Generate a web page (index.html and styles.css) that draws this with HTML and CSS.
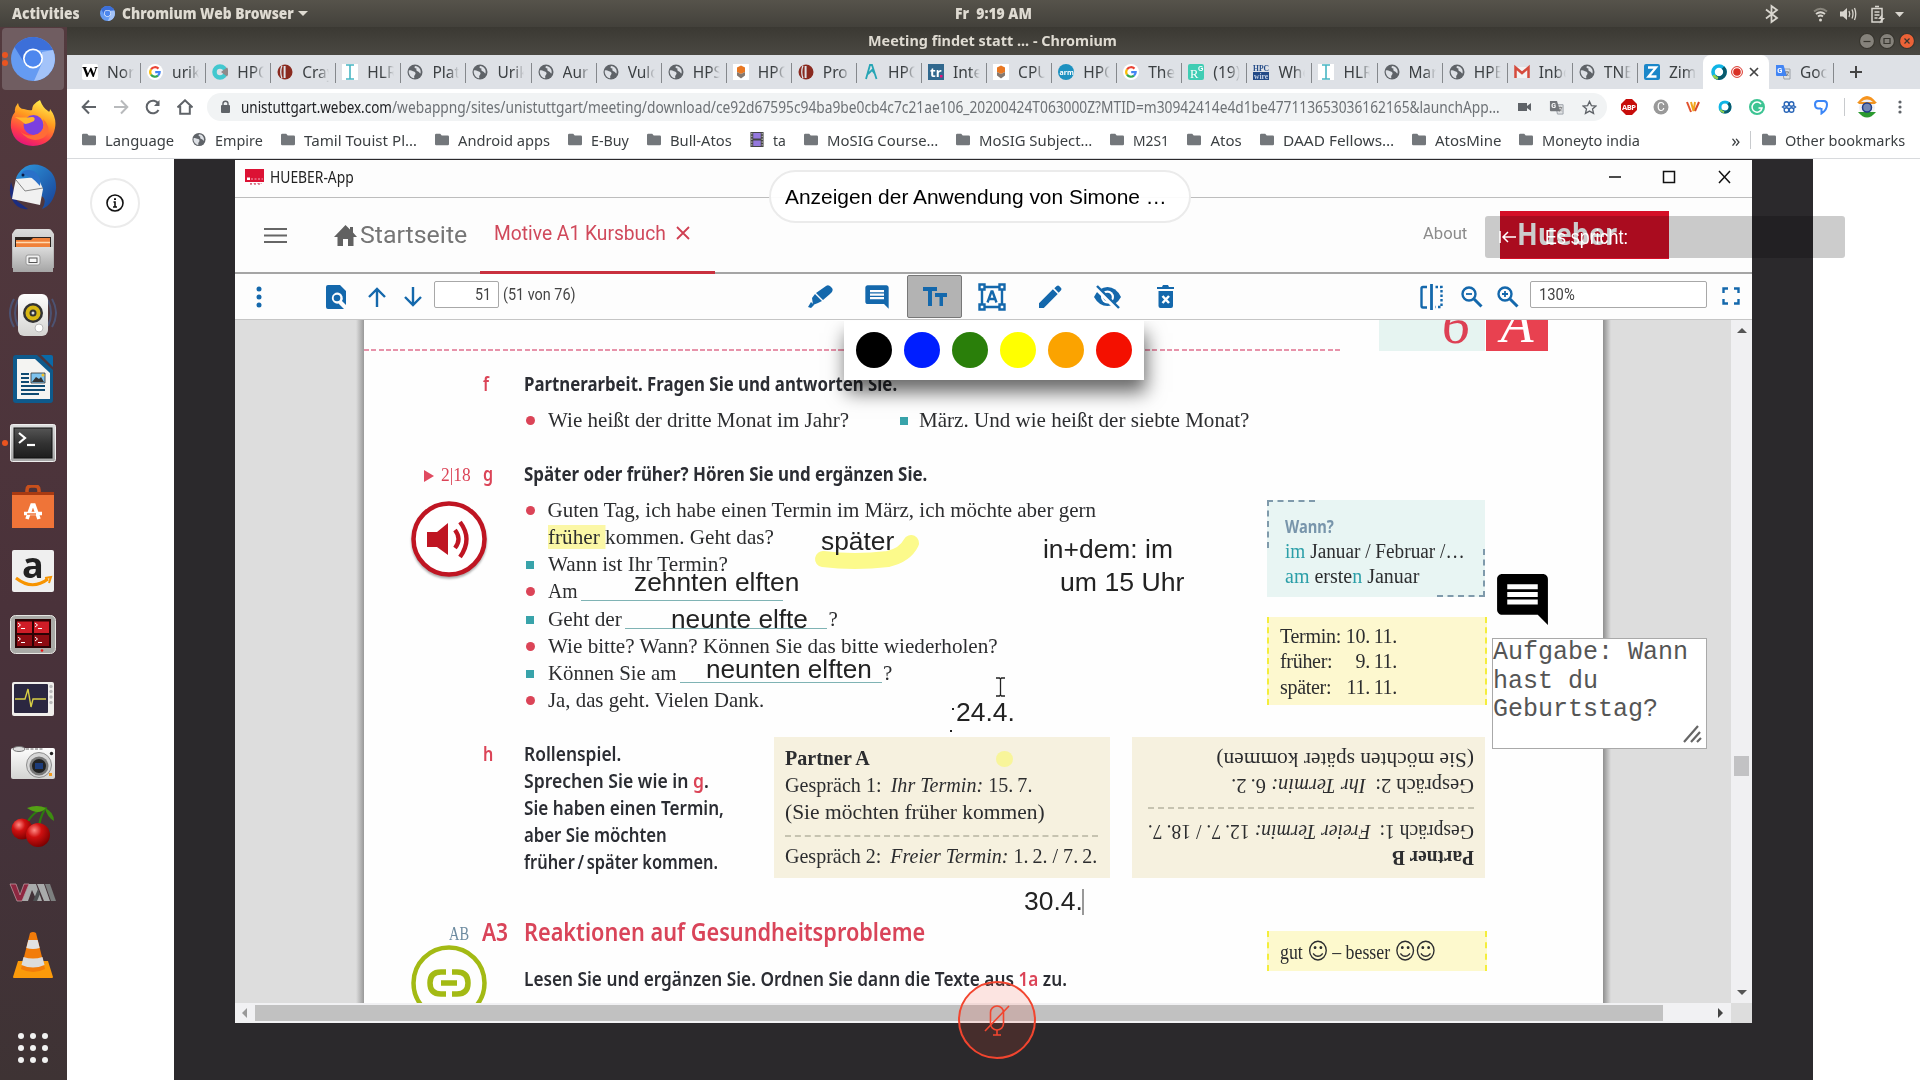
FILE: index.html
```html
<!DOCTYPE html>
<html lang="de">
<head>
<meta charset="utf-8">
<title>Meeting findet statt ... - Chromium</title>
<link rel="stylesheet" href="styles.css">
</head>
<body>
<svg class="defs" aria-hidden="true">
  <defs>
    <linearGradient id="gSilver" x1="0" y1="0" x2="0" y2="1"><stop offset="0" stop-color="#dcdcdc"/><stop offset="1" stop-color="#a5a5a5"/></linearGradient>
    <linearGradient id="gWhite" x1="0" y1="0" x2="0" y2="1"><stop offset="0" stop-color="#fdfdfd"/><stop offset="1" stop-color="#d4d4d2"/></linearGradient>
    <linearGradient id="gTerm" x1="0" y1="0" x2="0" y2="1"><stop offset="0" stop-color="#555"/><stop offset=".5" stop-color="#333"/><stop offset="1" stop-color="#1d1d1d"/></linearGradient>
    <linearGradient id="gFox" x1=".7" y1="0" x2=".3" y2="1"><stop offset="0" stop-color="#fff14f"/><stop offset=".4" stop-color="#ff9a1f"/><stop offset=".75" stop-color="#ff3b4a"/><stop offset="1" stop-color="#e2127f"/></linearGradient>
    <radialGradient id="gCherry" cx=".35" cy=".3" r=".75"><stop offset="0" stop-color="#ff8a84"/><stop offset=".4" stop-color="#cf1010"/><stop offset="1" stop-color="#7a0000"/></radialGradient>
    <linearGradient id="gBird" x1="0" y1="0" x2="1" y2="1"><stop offset="0" stop-color="#2f9ae0"/><stop offset="1" stop-color="#173f94"/></linearGradient>
  </defs>
  <symbol id="chromium" viewBox="0 0 44 44"><circle cx="22" cy="22" r="22" fill="#659bf2"/><path d="M3.500 10A22 22 0 0 1 42 13H22L14 27Z" fill="#3c6fd9"/><path d="M42 13A22 22 0 0 1 23 44L31 26L31 15Z" fill="#a3c3f9"/><circle cx="22" cy="21.500" r="10" fill="#fff"/><circle cx="22" cy="21.500" r="8.300" fill="#4d87ee"/></symbol>
  <symbol id="globe" viewBox="0 0 16 16"><circle cx="8" cy="8" r="7.500" fill="#5f6368"/><path d="M1.800 6.500C4 5.500 5 7 7 7.500C9.500 8.500 8.500 10.500 7.500 11.500S8 13.500 7 14.200C4 13.800 1.200 10.500 1.800 6.500ZM8 2C7 3.500 7.500 4.500 9.500 4.500C9 6 9.500 7 11 7.500S12.500 9.500 13.500 9.500C14.500 6 12 2 8 2Z" fill="#dee1e6"/></symbol>
  <symbol id="folder" viewBox="0 0 14 14"><path d="M0 2.500Q0 1.300 1.200 1.300H5.200L6.700 3H12.800Q14 3 14 4.200V11.500Q14 12.700 12.800 12.700H1.200Q0 12.700 0 11.500Z" fill="#73777b"/></symbol>
  <symbol id="google" viewBox="0 0 16 16"><circle cx="8" cy="8" r="8" fill="#fff"/><g fill="none" stroke-width="2.200"><path d="M4 5.500A4.800 4.800 0 0 1 11.500 4.600" stroke="#ea4335"/><path d="M4 5.400A4.800 4.800 0 0 0 4 10.700" stroke="#fbbc05"/><path d="M4 10.600A4.800 4.800 0 0 0 11 11.700" stroke="#34a853"/><path d="M11 11.700A4.700 4.700 0 0 0 12.700 8.100H8.200" stroke="#4285f4"/></g></symbol>
  <symbol id="cray" viewBox="0 0 16 16"><circle cx="8" cy="8" r="7.500" fill="#8a2a1f"/><path d="M5 1.500Q2.500 8 5 14.500" stroke="#dee1e6" stroke-width="1.300" fill="none"/><path d="M7.600 2V14" stroke="#dee1e6" stroke-width="2"/></symbol>
  <symbol id="ibar" viewBox="0 0 16 16"><path d="M0 0H16V16H0Z" fill="#fff"/><path d="M4 1H12M4 15H12M8 1V15" stroke="#48b6c4" stroke-width="1.600"/></symbol>
  <symbol id="cube" viewBox="0 0 16 16"><path d="M0 0H16V16H0Z" fill="#fff"/><path d="M8 1.500L12 3.500V8L8 10L4 8V3.500Z" fill="#e87722"/><path d="M4 8L8 10L12 8V11.500L8 14.500L4 11.500Z" fill="#85786f"/></symbol>
  <symbol id="webex" viewBox="0 0 16 16"><circle cx="8" cy="8" r="6" fill="none" stroke="#10b5e6" stroke-width="3.600"/><path d="M12 3.500A6 6 0 0 1 4 12.600" fill="none" stroke="#0b5a6b" stroke-width="3.600"/><path d="M7 14.200Q3.500 13.500 2.500 11" fill="none" stroke="#8fd14f" stroke-width="2.500"/></symbol>
  <symbol id="translate" viewBox="0 0 16 16"><path d="M7 5H15V15H9Z" fill="#dfe1e3" stroke="#9aa0a6"/><path d="M1 1H8.500L12 12H2Q1 12 1 11Z" fill="currentColor"/><text x="2.300" y="9" font-size="7.500" font-family="Roboto" font-weight="700" fill="#fff">G</text><path d="M10 8H14M12 7V8M13.500 8Q13 11 11 12M11 9.500L13.500 12" stroke="#777" stroke-width=".8" fill="none"/></symbol>
  <symbol id="commentbox" viewBox="0 0 24 24"><path d="M22 4C22 2.900 21.100 2 20 2H4C2.900 2 2 2.900 2 4V16C2 17.100 2.900 18 4 18H18L22 22V4ZM18 14H6V12H18V14ZM18 11H6V9H18V11ZM18 8H6V6H18V8Z"/></symbol>
  <symbol id="lens" viewBox="0 0 22 22"><circle cx="8" cy="8" r="6.500" fill="none" stroke="currentColor" stroke-width="2.400"/><path d="M13 13L20.500 20.500" stroke="currentColor" stroke-width="3"/></symbol>
</svg>

<header class="topbar">
  <span class="activities"><b data-w="68">Activities</b></span>
  <svg class="appicon" width="15" height="15"><use href="#chromium"/></svg>
  <b data-w="172">Chromium Web Browser</b><i class="caret"></i>
  <span class="clock"><b data-w="77">Fr&nbsp; 9:19 AM</b></span>
  <svg class="tray" width="150" height="22" viewBox="0 0 150 22" fill="none" stroke="#d9d6cf" stroke-width="1.800">
    <path d="M9 6.500L20 15L14.500 19V3L20 7L9 15.500"/>
    <path d="M57 8.500Q63.500 3 70 8.500" stroke="#88857c"/><path d="M59 11Q63.500 7.500 68 11M61 13.500Q63.500 11.500 66 13.500"/><circle cx="63.500" cy="17" r="1.500" fill="#d9d6cf" stroke="none"/>
    <path d="M83 8.500H86L90 5V17L86 13.500H83Z" fill="#d9d6cf" stroke="none"/><path d="M92 8Q93.500 11 92 14M95 6.500Q97 11 95 15.500M97.500 5Q100 11 97.500 17" stroke-width="1.300"/>
    <path d="M115 5.500H125V19H115ZM118 3.500H122M117.500 9H122.500M117.500 12H122.500M117.500 15H120.500" stroke-width="1.500"/><path d="M125.500 11L121 16H124L122.500 20.500L128 15H125Z" fill="#d9d6cf" stroke="none"/>
    <path d="M138 9H147L142.500 14Z" fill="#d9d6cf" stroke="none"/>
  </svg>
</header>

<div class="desktop">
  <nav class="dock">
    <div class="slot active run2"><svg width="44" height="44"><use href="#chromium"/></svg></div>
    <div class="slot"><svg width="46" height="46" viewBox="0 0 46 46"><path d="M30 0Q33 8 38 11Q40 13 40 9Q47 18 45 28Q42 45 23 46Q4 45 1 28Q0 18 5 12Q4 8 8 3Q9 9 14 9Q20 11 22 10Q22 4 30 0Z" fill="url(#gFox)"/><circle cx="23.500" cy="25" r="10" fill="#7b3fe0"/><path d="M5 17Q14 18 22 17Q26 17 24 21Q18 24 15 24Q12 21 5 17Z" fill="#ffb62d"/><path d="M10 31Q17 38 28 34Q36 29 33 19Q44 30 33 38Q20 44 10 31Z" fill="#ff6c36"/></svg></div>
    <div class="slot"><svg width="48" height="48" viewBox="0 0 48 48"><path d="M9 11Q18 -2 33 3Q48 9 47 26Q44 42 33 46Q38 38 34 34L7 20Q6 15 9 11Z" fill="url(#gBird)"/><path d="M2 19Q-2 34 8 43Q13 47 19 46L8 38Z" fill="#1b2d80"/><path d="M7 16L29 14L34 26L31 42L3 36Q5 24 7 16Z" fill="#f1f1f1"/><path d="M7 17L16 28L34 25" fill="none" stroke="#888"/><path d="M12 11Q15 5 25 8Q33 14 31 23Q22 12 12 11Z" fill="#2a71c9"/><circle cx="14" cy="12" r="1.500" fill="#0c1a44"/></svg></div>
    <div class="slot"><svg width="44" height="44" viewBox="0 0 44 44"><path d="M3 2Q4 0 6 0H38Q40 0 41 2L43 5V39H1V5Z" fill="url(#gSilver)"/><path d="M4 8H40V18H4Z" fill="#2b2320"/><path d="M5 11H20L22 9H39V18H5Z" fill="#f0813a"/><path d="M5 13.500H39" stroke="#ffd9b0" stroke-width="1.500"/><path d="M2 18H42V43H2Z" fill="url(#gSilver)"/><rect x="15" y="26" width="14" height="10" rx="2" fill="#f0f0f0" stroke="#999"/><rect x="18" y="29" width="8" height="4.500" fill="#f7f7f7" stroke="#555"/></svg></div>
    <div class="slot"><svg width="48" height="44" viewBox="0 0 48 44"><path d="M5 6Q-3 20 5 34M9 7Q3 20 9 33M43 6Q51 20 43 34M39 7Q45 20 39 33" fill="none" stroke="#4b5f8a" stroke-width="2" opacity=".7"/><rect x="9" y="1" width="30" height="42" rx="6" fill="url(#gWhite)"/><circle cx="24" cy="20" r="10" fill="#333"/><circle cx="24" cy="20" r="7.500" fill="#d8b712"/><circle cx="24" cy="20" r="3.500" fill="#333"/><circle cx="24" cy="20" r="1.500" fill="#ddd"/><circle cx="30" cy="35" r="4" fill="#fff" stroke="#bbb"/></svg></div>
    <div class="slot"><svg width="40" height="48" viewBox="0 0 40 48"><path d="M3 0H24L40 15V45Q40 48 37 48H3Q0 48 0 45V3Q0 0 3 0Z" fill="#0e5a8c"/><path d="M4 4H22L37 18V44H4Z" fill="#f4f4f2"/><path d="M28 0H38Q40 0 40 2V12Z" fill="#0a6aa8"/><path d="M8 19H16M8 23H16M8 27H16M8 31H32M8 35H32M8 39H26" stroke="#0e4a72" stroke-width="1.800"/><path d="M18 18H32V28H18Z" fill="#7ec3ee" stroke="#333" stroke-width=".8"/><path d="M19 27L23 22L26 24L28 22L31 27Z" fill="#333"/><circle cx="30" cy="20" r="1.500" fill="#f6c324"/></svg></div>
    <div class="slot run1"><svg width="46" height="38" viewBox="0 0 46 38"><rect x=".5" y=".5" width="45" height="37" rx="2" fill="url(#gSilver)" stroke="#eee"/><rect x="4" y="4" width="38" height="30" fill="url(#gTerm)" stroke="#111"/><path d="M9 9L15 14L9 19" fill="none" stroke="#fff" stroke-width="2.200"/><path d="M17 21H25" stroke="#fff" stroke-width="2.200"/></svg></div>
    <div class="slot"><svg width="42" height="44" viewBox="0 0 42 44"><path d="M15 12V5Q15 1 19 1H23Q27 1 27 5V12" fill="none" stroke="#c9501c" stroke-width="3.500"/><path d="M0 7H42V13H0Z" fill="#a83a12"/><path d="M0 10H42V43H0Z" fill="#ef7438"/><path d="M15 34L20 20H22L27 34M12 28.500H30" stroke="#fff" stroke-width="3.600" fill="none"/><path d="M15 29H24" stroke="#ef7438" stroke-width="1.500"/></svg></div>
    <div class="slot"><svg width="42" height="42" viewBox="0 0 42 42"><rect width="42" height="42" rx="2" fill="#efefef"/><text x="10" y="28" font-family="Open Sans" font-weight="700" font-size="36" fill="#222">a</text><path d="M4 28Q20 41 36 29" fill="none" stroke="#f79400" stroke-width="3"/><path d="M33 28L39 27L37 33" fill="none" stroke="#f79400" stroke-width="2"/></svg></div>
    <div class="slot"><svg width="46" height="40" viewBox="0 0 46 40"><rect x=".5" y=".5" width="45" height="38" rx="5" fill="#a9aaa6" stroke="#e6e6e2"/><rect x="5" y="4" width="36" height="29" fill="#2b0305"/><path d="M7 6.500H22V18H7ZM24 6.500H39V18H24Z" fill="#cf1d27"/><path d="M7 20H22V31H7ZM24 20H39V31H24Z" fill="#8d0c12"/><path d="M8 8L10.500 10L8 12M25 8L27.500 10L25 12M8 22L10.500 24L8 26M25 22L27.500 24L25 26M11 13.500H15M28 13.500H32M11 27.500H15M28 27.500H32" stroke="#fff" fill="none"/><circle cx="32" cy="35.500" r="1.300" fill="#e11"/></svg></div>
    <div class="slot"><svg width="42" height="34" viewBox="0 0 42 34"><rect width="42" height="34" rx="2" fill="#f1efec"/><rect x="2" y="2" width="34" height="29" rx="1" fill="#2b2740"/><path d="M3 17H13L16 7L19 25L21 17H34" fill="none" stroke="#d8cf45" stroke-width="1.400"/><g fill="#bbb"><circle cx="39" cy="4.500" r="1.700"/><circle cx="39" cy="9.500" r="1.700"/><circle cx="39" cy="15" r="1.700"/><circle cx="39" cy="20.500" r="1.700"/></g></svg></div>
    <div class="slot"><svg width="44" height="34" viewBox="0 0 44 34"><rect y="2" width="44" height="31" rx="2" fill="url(#gWhite)"/><ellipse cx="8" cy="3" rx="6" ry="2.500" fill="#ddd" stroke="#777"/><path d="M15 3H32" stroke="#666" stroke-dasharray="3 1.500"/><circle cx="28" cy="19" r="12.500" fill="#d6d6d6" stroke="#8d8d8d"/><circle cx="28" cy="20" r="9.500" fill="#777"/><circle cx="28" cy="20" r="7" fill="#222"/><rect x="24" y="17" width="8" height="6" fill="#1d3c7a"/><circle cx="40.500" cy="7.500" r="1.700" fill="#222"/><path d="M38 27H41V30H38Z" fill="#f29a1f"/></svg></div>
    <div class="slot"><svg width="44" height="44" viewBox="0 0 44 44"><path d="M15 20Q22 5 36 3M28 24Q28 14 34 4" fill="none" stroke="#2d7a10" stroke-width="2.200"/><path d="M16 3Q26 -1 35 3Q28 11 16 3Z" fill="#54a014"/><path d="M34 3Q43 7 43 16Q36 12 34 3Z" fill="#3d8d10"/><circle cx="11" cy="24" r="10.500" fill="url(#gCherry)"/><circle cx="27" cy="30" r="12" fill="url(#gCherry)"/></svg></div>
    <div class="slot vm"><svg width="48" height="20" viewBox="0 0 48 20"><path d="M1 1H7L11 12L15 1H20L13 18H8Z" fill="#8d2740" stroke="#c9a3ab" stroke-width=".7"/><path d="M13 18L20 1H27L33 18H28L23 7L19 18ZM28 1H35L41 18H35Z" fill="#a9abab"/><path d="M36 1H41L47 18H42Z" fill="#7c7f7f"/><path d="M24 18L29 6L31 11L28 18Z" fill="#4d5052"/></svg></div>
    <div class="slot"><svg width="42" height="46" viewBox="0 0 42 46"><path d="M6 29H36L41 45Q41 46 40 46H2Q1 46 1 45Z" fill="#fb9a0a"/><path d="M18 1Q21 -1 24 1L33 37Q21 43 9 37Z" fill="#f27c0a"/><path d="M16.300 8H25.700L27.700 16Q21 18 14.300 16Z" fill="#e2e2e2"/><path d="M11.500 25Q21 28 30.500 25L32.500 33Q21 38 9.500 33Z" fill="#dcdcdc"/></svg></div>
    <div class="grid9"><i></i><i></i><i></i><i></i><i></i><i></i><i></i><i></i><i></i></div>
  </nav>

  <div class="browser">
    <div class="titlebar">
      <b data-w="249">Meeting findet statt ... - Chromium</b>
      <div class="winbtns"><svg viewBox="0 0 16 16"><circle cx="8" cy="8" r="7.500"/><path d="M4.500 8.500H11.500"/></svg><svg viewBox="0 0 16 16"><circle cx="8" cy="8" r="7.500"/><path d="M5 5.500H11V10.500H5Z"/></svg><svg class="x" viewBox="0 0 16 16"><circle cx="8" cy="8" r="7.500"/><path d="M5.500 5.500L10.500 10.500M10.500 5.500L5.500 10.500"/></svg></div>
    </div>

    <div class="tabs">
      <div class="tab"><svg><rect width="16" height="16" rx="2" fill="#fff"/><text x="0" y="13" font-family="Liberation Serif" font-weight="700" font-size="15" textLength="16" lengthAdjust="spacingAndGlyphs">W</text></svg><span>Nor</span></div>
      <div class="tab"><svg><use href="#google"/></svg><span>urik</span></div>
      <div class="tab"><svg><circle cx="8" cy="8" r="5.500" fill="none" stroke="#42c8cf" stroke-width="4.500"/><path d="M9 8L15 3.500A7.500 7.500 0 0 1 15 12.500Z" fill="#8f8a8a"/></svg><span>HPC</span></div>
      <div class="tab"><svg><use href="#cray"/></svg><span>Cray</span></div>
      <div class="tab"><svg><use href="#ibar"/></svg><span>HLR</span></div>
      <div class="tab"><svg><use href="#globe"/></svg><span>Plat</span></div>
      <div class="tab"><svg><use href="#globe"/></svg><span>Urik</span></div>
      <div class="tab"><svg><use href="#globe"/></svg><span>Aur</span></div>
      <div class="tab"><svg><use href="#globe"/></svg><span>Vulc</span></div>
      <div class="tab"><svg><use href="#globe"/></svg><span>HPS</span></div>
      <div class="tab"><svg><use href="#cube"/></svg><span>HPC</span></div>
      <div class="tab"><svg><use href="#cray"/></svg><span>Pro</span></div>
      <div class="tab"><svg fill="none" stroke="#26a5b5" stroke-width="1.800"><path d="M3 15L7 1H9L13.500 15M5 10L9 6L12 10"/></svg><span>HPC</span></div>
      <div class="tab"><svg><path d="M0 0H16V16H0Z" fill="#31688e"/><text x="2" y="13" font-family="Open Sans" font-weight="700" font-size="13" fill="#fff">tr</text><path d="M12 11H14.500V13.500H12Z" fill="#e8127c"/></svg><span>Inte</span></div>
      <div class="tab"><svg><use href="#cube"/></svg><span>CPU</span></div>
      <div class="tab"><svg><circle cx="8" cy="8" r="8" fill="#1d91c0"/><text x="1.500" y="10.500" font-family="Open Sans" font-weight="700" font-size="7" fill="#fff">arm</text></svg><span>HPC</span></div>
      <div class="tab"><svg><use href="#google"/></svg><span>The</span></div>
      <div class="tab"><svg><rect width="16" height="16" rx="2" fill="#40cdb4"/><text x="2" y="13.500" font-family="Liberation Serif" font-size="12.500" fill="#fff">R</text><text x="10" y="7" font-family="Liberation Sans" font-weight="700" font-size="7" fill="#fff">G</text></svg><span>(19)</span></div>
      <div class="tab"><svg><text y="7" font-family="Liberation Serif" font-weight="700" font-size="8" fill="#234a87" textLength="16" lengthAdjust="spacingAndGlyphs">HPC</text><path d="M0 8H16V16H0Z" fill="#234a87"/><text x="1" y="14.500" font-family="Liberation Serif" font-weight="700" font-size="7.500" fill="#c5d3e8">wire</text></svg><span>Whe</span></div>
      <div class="tab"><svg><use href="#ibar"/></svg><span>HLR</span></div>
      <div class="tab"><svg><use href="#globe"/></svg><span>Mar</span></div>
      <div class="tab"><svg><use href="#globe"/></svg><span>HPE</span></div>
      <div class="tab"><svg><path d="M1 3H15V14H1Z" fill="#f2f2f2"/><path d="M1.500 14V3.500L8 9L14.500 3.500V14" fill="none" stroke="#d54b3d" stroke-width="2.500"/></svg><span>Inbo</span></div>
      <div class="tab"><svg><use href="#globe"/></svg><span>TNE</span></div>
      <div class="tab last"><svg><rect width="16" height="16" rx="2" fill="#1b87c9"/><path d="M4 3.500H12L4.500 12.500H12.500" fill="none" stroke="#fff" stroke-width="2.300"/></svg><span>Zim</span></div>
      <div class="tab current"><svg><use href="#webex"/></svg><svg width="12" height="16" viewBox="0 0 12 16"><circle cx="6" cy="8" r="5.400" fill="#fff" stroke="#d93025"/><circle cx="6" cy="8" r="3.800" fill="#d93025"/></svg><svg width="10" height="16" viewBox="0 0 10 16"><path d="M1 4L9 12M9 4L1 12" stroke="#444" stroke-width="1.700"/></svg></div>
      <div class="tab"><svg class="gt"><use href="#translate"/></svg><span>Goo</span></div>
      <svg class="plus" width="14" height="14" viewBox="0 0 14 14"><path d="M7 1V13M1 7H13" stroke="#444" stroke-width="2"/></svg>
    </div>

    <div class="navbar">
      <svg width="16" height="16" viewBox="0 0 16 16" class="ln"><path d="M15 8H2M8 1.500L1.700 8L8 14.500"/></svg>
      <svg width="16" height="16" viewBox="0 0 16 16" class="ln dim"><path d="M1 8H14M8 1.500L14.300 8L8 14.500"/></svg>
      <svg width="16" height="16" viewBox="0 0 16 16" class="ln"><path d="M13.500 11A6.300 6.300 0 1 1 13.500 5"/><path d="M14.500 1V7H9Z" fill="#5f6368" stroke="none"/></svg>
      <svg width="16" height="16" viewBox="0 0 16 16" class="ln"><path d="M.5 8.500L8 1.300L15.500 8.500M3.200 7V14.700H12.800V7"/></svg>
      <div class="omnibox">
        <svg width="9" height="14" viewBox="0 0 9 14"><rect y="5" width="9" height="8" rx="1" fill="#5f6368"/><path d="M2 6V3.500Q2 1.300 4.500 1.300T7 3.500V6" fill="none" stroke="#5f6368" stroke-width="1.400"/></svg>
        <span class="url"><span class="host" data-w="151">unistuttgart.webex.com</span><span data-w="1108">/webappng/sites/unistuttgart/meeting/download/ce92d67595c94ba9be0cb4c7c21ae106_20200424T063000Z?MTID=m30942414e4d1be477113653036162165&amp;launchApp…</span></span>
        <svg width="13" height="10" viewBox="0 0 13 10"><path d="M0 1H9V4L13 1V9L9 6V9H0Z" fill="#5f6368"/></svg>
        <svg width="15" height="15" viewBox="0 0 16 16" class="grey"><use href="#translate"/></svg>
        <svg width="15" height="15" viewBox="0 0 16 16"><path d="M8 1.500L10 6L14.800 6.400L11.200 9.600L12.300 14.300L8 11.800L3.700 14.300L4.800 9.600L1.200 6.400L6 6Z" fill="none" stroke="#5f6368" stroke-width="1.400"/></svg>
      </div>
      <div class="ext">
        <svg><path d="M5 0H11L16 5V11L11 16H5L0 11V5Z" fill="#c70d0b"/><text x="1" y="11" font-family="Open Sans" font-weight="700" font-size="7.500" fill="#fff" textLength="14">ABP</text></svg>
        <svg><circle cx="8" cy="8" r="7.500" fill="#999"/><text x="4" y="12" font-family="Roboto" font-size="12" fill="#fff">C</text></svg>
        <svg fill="none" stroke-width="2"><path d="M2 3L6 13" stroke="#e2502d"/><path d="M6 3L8.500 12L10 3" stroke="#f2a51c"/><path d="M14 3L10 12" stroke="#d6492a"/></svg>
        <svg viewBox="-1.500 -1.500 19 19"><use href="#webex" width="16" height="16"/></svg>
        <svg><circle cx="8" cy="8" r="8" fill="#3dc493"/><path d="M12 5A5 5 0 1 0 13 9H9.500" fill="none" stroke="#fff" stroke-width="1.500"/></svg>
        <svg fill="none" stroke="#2a66b8" stroke-width="1.400"><circle cx="5.500" cy="5" r="2.300"/><circle cx="10.500" cy="5" r="2.300"/><circle cx="5.500" cy="11" r="2.300"/><circle cx="10.500" cy="11" r="2.300"/><path d="M3.500 6.500L1.500 8L3.500 9.500M12.500 6.500L14.500 8L12.500 9.500"/></svg>
        <svg fill="none" stroke="#3b86f7" stroke-width="2"><path d="M8 9.500H5Q2 9 2 5.500T5 2H11Q14 2 14 5.500Q14 11 8.500 14.500V9"/></svg>
      </div>
      <i class="vsep"></i>
      <svg class="avatar" width="22" height="22" viewBox="0 0 22 22"><path d="M2 6Q11 -6 20 6Z" fill="#f7941d"/><circle cx="11" cy="11.500" r="8" fill="#eef0f5"/><path d="M2 16H20Q11 27 2 16Z" fill="#2b9a2f"/><path d="M1 6H21L19 8H3Z" fill="#ee9422"/><circle cx="11" cy="11.500" r="4.500" fill="#7287b5" stroke="#1f3c88" stroke-width="1.500"/></svg>
      <svg width="4" height="14" viewBox="0 0 4 14" fill="#5f6368"><circle cx="2" cy="2" r="1.600"/><circle cx="2" cy="7" r="1.600"/><circle cx="2" cy="12" r="1.600"/></svg>
    </div>

    <div class="bookmarks">
      <a><svg><use href="#folder"/></svg><span data-w="69">Language</span></a>
      <a><svg><use href="#globe"/></svg><span data-w="48">Empire</span></a>
      <a><svg><use href="#folder"/></svg><span data-w="113">Tamil Touist Pl…</span></a>
      <a><svg><use href="#folder"/></svg><span data-w="92">Android apps</span></a>
      <a><svg><use href="#folder"/></svg><span data-w="38">E-Buy</span></a>
      <a><svg><use href="#folder"/></svg><span data-w="62">Bull-Atos</span></a>
      <a><svg viewBox="0 0 14 16"><path d="M0 0H14V16H0Z" fill="#444"/><path d="M3 1H11V7H3ZM3 9H11V15H3Z" fill="#9478dd"/><path d="M1.500 1V16M12.500 1V16" stroke="#ddd" stroke-dasharray="1.500 1.500"/></svg><span data-w="13">ta</span></a>
      <a><svg><use href="#folder"/></svg><span data-w="111">MoSIG Course…</span></a>
      <a><svg><use href="#folder"/></svg><span data-w="113">MoSIG Subject…</span></a>
      <a><svg><use href="#folder"/></svg><span data-w="36">M2S1</span></a>
      <a><svg><use href="#folder"/></svg><span data-w="31">Atos</span></a>
      <a><svg><use href="#folder"/></svg><span data-w="111">DAAD Fellows…</span></a>
      <a><svg><use href="#folder"/></svg><span data-w="66">AtosMine</span></a>
      <a><svg><use href="#folder"/></svg><span data-w="98">Moneyto india</span></a>
      <span class="more">»</span><i class="vsep"></i>
      <a class="other"><svg><use href="#folder"/></svg><span data-w="120">Other bookmarks</span></a>
    </div>

    <main class="meeting">
      <div class="side"><button class="info" aria-label="Info"><svg width="18" height="18" viewBox="0 0 18 18" fill="none" stroke="#111" stroke-width="1.600"><circle cx="9" cy="9" r="8"/><path d="M7.500 8H9V13M7 13H11"/><path d="M9 4.300V6" stroke-width="2"/></svg></button></div>
      <div class="stage">
        <div class="share">
          <div class="apptitle">
            <svg width="19" height="17" viewBox="0 0 19 17"><path d="M0 0H19V13H0Z" fill="#dc1234"/><path d="M2 8.500H5V11H2Z" fill="#fff"/><path d="M6 10H18M5 14.500H17" stroke="#eab" stroke-dasharray="2 1.500"/><path d="M5 15H17" stroke="#c22b48" stroke-dasharray="2 2"/></svg>
            <span data-w="84">HUEBER-App</span>
            <svg class="wc" width="124" height="14" viewBox="0 0 124 14" fill="none" stroke="#111" stroke-width="1.500"><path d="M1 7H13M111 1L122 13M122 1L111 13"/><rect x="55.500" y="1.500" width="11" height="11"/></svg>
          </div>
          <div class="appnav">
            <svg class="burger" width="23" height="17" viewBox="0 0 23 17"><path d="M0 2H23M0 8.500H23M0 15H23" stroke="#666" stroke-width="2.200"/></svg>
            <svg class="home" width="23" height="21" viewBox="0 0 23 21"><path d="M11.500 0L16 4.500V2H19V7.500L23 12H19.500V21H14V14H9V21H3.500V12H0Z" fill="#616161"/></svg>
            <span class="start" data-w="107">Startseite</span>
            <div class="booktab"><span data-w="172">Motive A1 Kursbuch</span><svg width="14" height="14" viewBox="0 0 14 14"><path d="M1 1L13 13M13 1L1 13" stroke="#cf3f52" stroke-width="1.800"/></svg></div>
            <span class="about"><span data-w="44">About</span></span>
            <div class="logo"><span data-w="100">Hueber</span></div>
          </div>
          <div class="tools">
            <svg width="6" height="22" viewBox="0 0 6 22"><circle cx="3" cy="3" r="2.500"/><circle cx="3" cy="11" r="2.500"/><circle cx="3" cy="19" r="2.500"/></svg>
            <svg width="21" height="24" viewBox="0 0 21 24"><path d="M2 0H14L20 6V20L16 16A5.500 5.500 0 1 0 12.500 18.500L18 24H2Q0 24 0 22V2Q0 0 2 0Z"/><circle cx="11" cy="13" r="3.300"/></svg>
            <svg class="st" width="18" height="20" viewBox="0 0 18 20"><path d="M9 20V2M1 10L9 2L17 10"/></svg>
            <svg class="st" width="18" height="20" viewBox="0 0 18 20"><path d="M9 0V18M1 10L9 18L17 10"/></svg>
            <div class="box pageno"><span data-w="16">51</span></div>
            <div class="cnt"><span data-w="73">(51 von 76)</span></div>
            <svg width="25" height="24" viewBox="0 0 25 24"><path d="M18 1Q21 -1 24 3Q26 6 22 9L15 15L8 8ZM7 9L14 16L10 18L5 20L4 13ZM3 17L6 20L3 23L0 22Z"/></svg>
            <svg width="28" height="28"><use href="#commentbox"/></svg>
            <div class="pressed"><svg width="24" height="20" viewBox="0 0 24 20"><path d="M0 0H14V4H9V19H5V4H0ZM12 6H24V10H20V19H16.500V10H12Z"/></svg></div>
            <svg class="st" width="28" height="28" viewBox="0 0 28 28" stroke-width="2"><path d="M4 4H24V24H4Z"/><path d="M1.500 1.500H6.500V6.500H1.500ZM21.500 1.500H26.500V6.500H21.500ZM1.500 21.500H6.500V26.500H1.500ZM21.500 21.500H26.500V26.500H21.500Z" fill="#fff"/><path d="M9.500 19.500L13.500 8.500H14.500L18.500 19.500M11 16H17"/></svg>
            <svg width="23" height="23" viewBox="0 0 24 24"><path d="M0 19L14.500 4.500L19.500 9.500L5 24H0ZM20.500 8L16 3.500L18.500 1Q20 0 21 1L23 3Q24 4 23 5.500Z"/></svg>
            <svg width="27" height="24" viewBox="0 0 27 24"><path d="M0 12Q5 2 13.500 2T27 12Q22 21 13.500 21T0 12Z"/><circle cx="13.500" cy="12" r="6.500" fill="#fff"/><circle cx="13.500" cy="12" r="4.300"/><path d="M1.500 2L23.500 24" stroke="#fff" stroke-width="5"/><path d="M3 1L25 23" stroke="#1468ac" stroke-width="2.400"/></svg>
            <svg width="17" height="23" viewBox="0 0 17 23"><path d="M0 2H5L6 0H11L12 2H17V4H0ZM1.500 6H16V21Q16 23 14 23H3.500Q1.500 23 1.500 21Z"/><path d="M5.500 11L12 18M12 11L5.500 18" stroke="#fff" stroke-width="2.500"/></svg>
            <svg class="st" width="23" height="26" viewBox="0 0 23 26"><path d="M7 3H3Q1.500 3 1.500 4.500V21.500Q1.500 23.500 3 23.500H7"/><path d="M11.500 0V26" stroke-width="2.800"/><path d="M15.500 3H21.500V23H15.500" stroke-dasharray="2.500 2"/></svg>
            <svg class="st" width="22" height="22" viewBox="0 0 22 22"><use href="#lens"/><path d="M5 8H11" stroke-width="1.800"/></svg>
            <svg class="st" width="22" height="22" viewBox="0 0 22 22"><use href="#lens"/><path d="M5 8H11M8 5V11" stroke-width="1.800"/></svg>
            <div class="box zoom"><span data-w="36">130%</span></div>
            <svg class="st full" width="18" height="18" viewBox="0 0 18 18" stroke-width="3"><path d="M1.500 6V1.500H6M12 1.500H16.500V6M16.500 12V16.500H12M6 16.500H1.500V12"/></svg>
            <div class="palette"><i class="c1"></i><i class="c2"></i><i class="c3"></i><i class="c4"></i><i class="c5"></i><i class="c6"></i></div>
          </div>

          <div class="viewer">
            <article class="sheet">
              <div class="pagehead"><i class="rule"></i><div class="chap"><i>6</i></div><div class="part"><i>A</i></div></div>
              <div class="upper">
                <div class="lesson">
                  <h3><em class="lf">f</em><span data-w="373">Partnerarbeit. Fragen Sie und antworten Sie.</span></h3>
                  <div class="duo"><p class="r"><span data-w="301">Wie heißt der dritte Monat im Jahr?</span></p><p class="s"><span data-w="330">März. Und wie heißt der siebte Monat?</span></p></div>
                  <h3 class="g"><small><span data-w="30">2|18</span></small><em>g</em><span data-w="403">Später oder früher? Hören Sie und ergänzen Sie.</span></h3>
                  <div class="talk">
                    <svg class="speaker" width="76" height="78" viewBox="0 0 76 78"><circle cx="38" cy="38" r="35.500" fill="#fff" stroke="#bf1522" stroke-width="4.500"/><path d="M16 31H26L37 22V54L26 46H16Z" fill="#bf1522"/><path d="M44 29Q51 38 44 47M49 21Q62 38 49 56" fill="none" stroke="#bf1522" stroke-width="4.300"/></svg>
                    <p class="r"><span data-w="549">Guten Tag, ich habe einen Termin im März, ich möchte aber gern</span></p>
                    <p><span data-w="226"><mark>früher </mark>kommen. Geht das?</span></p>
                    <p class="s"><span data-w="180">Wann ist Ihr Termin?</span></p>
                    <p class="r"><span data-w="30">Am</span><u></u></p>
                    <p class="s"><span data-w="74">Geht der</span><u></u>?</p>
                    <p class="r"><span data-w="450">Wie bitte? Wann? Können Sie das bitte wiederholen?</span></p>
                    <p class="s"><span data-w="128">Können Sie am</span><u></u>?</p>
                    <p class="r"><span data-w="216">Ja, das geht. Vielen Dank.</span></p>
                  </div>
                </div>
                <aside>
                  <div class="wann"><b data-w="49">Wann?</b><p><span data-w="180"><q>im</q> Januar / Februar /…</span></p><p><span data-w="134"><q>am</q> erste<q>n</q> Januar</span></p></div>
                  <div class="dates"><p><span>Termin:</span><span>10.&thinsp;11.</span></p><p><span>früher:</span><span>9.&thinsp;11.</span></p><p><span>später:</span><span>11.&thinsp;11.</span></p></div>
                </aside>
              </div>
              <div class="role">
                <em>h</em>
                <div class="roletext"><p data-w="97">Rollenspiel.</p><p data-w="185">Sprechen Sie wie in <q>g</q>.</p><p data-w="200">Sie haben einen Termin,</p><p data-w="143">aber Sie möchten</p><p data-w="194">früher&thinsp;/&thinsp;später kommen.</p></div>
                <div class="card"><p><b data-w="85">Partner A</b></p><p><span data-w="247">Gespräch 1:&thinsp; <i>Ihr Termin:</i> 15.&thinsp;7.</span></p><p><span data-w="260">(Sie möchten früher kommen)</span></p><hr><p><span data-w="312">Gespräch 2:&thinsp; <i>Freier Termin:</i> 1.&thinsp;2. / 7.&thinsp;2.</span></p></div>
                <div class="card flip"><p><b data-w="82">Partner B</b></p><p><span data-w="326">Gespräch 1:&thinsp; <i>Freier Termin:</i> 12.&thinsp;7. / 18.&thinsp;7.</span></p><hr><p><span data-w="243">Gespräch 2:&thinsp; <i>Ihr Termin:</i> 6.&thinsp;2.</span></p><p><span data-w="258">(Sie möchten später kommen)</span></p></div>
              </div>
              <div class="next">
                <div class="lesson">
                  <h2><small><span data-w="20">AB</span></small><em data-w="26">A3</em><span data-w="401">Reaktionen auf Gesundheitsprobleme</span></h2>
                  <h3><span data-w="543">Lesen Sie und ergänzen Sie. Ordnen Sie dann die Texte aus <q>1a</q> zu.</span></h3>
                  <svg class="link" width="76" height="76" viewBox="0 0 76 76" fill="none" stroke="#a3ba14"><circle cx="38" cy="38" r="35.500" stroke-width="4.500"/><path d="M35 27H30Q19 27 19 38T30 49H35M41 27H46Q57 27 57 38T46 49H41M30 38H46" stroke-width="5.500"/></svg>
                </div>
                <div class="gut"><span data-w="156">gut <s>☺</s> – besser <s>☺☺</s></span></div>
              </div>

              <svg class="marker" width="108" height="42" viewBox="0 0 108 42"><path d="M9 27Q40 31 74 27Q91 23 97 11" fill="none" stroke="#fdfb8c" stroke-width="16" stroke-linecap="round"/></svg>
              <span class="note n1" data-w="73">später</span>
              <span class="note n2" data-w="165">zehnten elften</span>
              <span class="note n3" data-w="137">neunte elfte</span>
              <span class="note n4" data-w="166">neunten elften</span>
              <span class="note n5" data-w="130">in+dem: im</span>
              <span class="note n6" data-w="124">um 15 Uhr</span>
              <span class="note n7" data-w="59">24.4.</span>
              <span class="note n8" data-w="59">30.4.</span>
              <i class="textcaret"></i><i class="dot d1"></i><i class="dot d2"></i><i class="blob"></i>
              <svg class="ibeam" width="9" height="20" viewBox="0 0 9 20"><path d="M0 1H3.500L4.500 2L5.500 1H9M4.500 2V18M0 19H3.500L4.500 18L5.500 19H9" fill="none" stroke="#222" stroke-width="1.300"/></svg>
              <svg class="cicon" width="61" height="61"><use href="#commentbox"/></svg>
            </article>
            <div class="sticky"><p>Aufgabe: Wann</p><p>hast du</p><p>Geburtstag?</p><svg width="19" height="18" viewBox="0 0 19 18"><path d="M1 17L15 1M8 17L17 7M14 17L18 13" stroke="#666" stroke-width="2.200"/></svg></div>
            <div class="vbar"><i class="up"></i><i class="thumb"></i><i class="down"></i></div>
          </div>
          <div class="hbar"><i class="left"></i><i class="thumb"></i><i class="right"></i></div>
        </div>

        <div class="pill"><span data-w="382">Anzeigen der Anwendung von Simone …</span></div>
        <div class="speaks"><svg width="18" height="14" viewBox="0 0 18 14"><path d="M1 1V13M17 7H4M9 2L4 7L9 12" fill="none" stroke="#fff" stroke-width="1.500"/></svg><span data-w="83">Es spricht:</span></div>
        <button class="mic" aria-label="Mikrofon"><svg width="26" height="32" viewBox="0 0 26 32" fill="none" stroke="#f2452f" stroke-width="1.600"><rect x="6.500" y="2" width="13" height="24" rx="6.500"/><path d="M13 26V31M9 31H17M1 27L25 2"/></svg></button>
      </div>
    </main>
  </div>
</div>
<script src="fit.js"></script>
</body>
</html>
```
FILE: styles.css
```css
* { box-sizing: border-box; }
body { margin: 0; width: 1920px; height: 1080px; overflow: hidden; background: #fff; font: 16px "Noto Sans", "Open Sans", sans-serif; color: #3c4043; }
p, h2, h3 { margin: 0; }
svg { display: block; flex: none; }
button { padding: 0; font: inherit; }
q { quotes: none; }
.defs { position: absolute; width: 0; height: 0; }
[data-w] { display: inline-block; white-space: pre; transform-origin: 0 50%; flex: none; }

/* GNOME top bar */
.topbar { display: flex; align-items: center; height: 27px; padding-left: 12px; background: linear-gradient(#56534b, #43413b); color: #dfdbd2; font: 700 15px/27px "Noto Sans", sans-serif; position: relative; }
.appicon { margin: 0 7px 0 20px; }
.caret { margin-left: 5px; border: 5px solid transparent; border-top-color: #dfdbd2; border-bottom: 0; }
.clock { margin-left: 647px; }
.tray { margin-left: auto; margin-right: 13px; }

.desktop { display: flex; height: 1053px; }
.dock { width: 67px; display: flex; flex-direction: column; background: linear-gradient(#533a3e, #4a323a 55%, #45323a 75%, #3e3334); flex: none; }
.slot { height: 64px; display: flex; align-items: center; justify-content: center; padding-right: 1px; flex: none; position: relative; }
.slot.vm { padding-top: 4px; }
.slot.active::before { content: ""; position: absolute; inset: 1px 3px 1px 2px; border-radius: 4px; background: #705d61; }
.slot svg { position: relative; }
.run1::after, .run2::after { content: ""; position: absolute; left: 2px; top: 29px; width: 6px; height: 6px; border-radius: 50%; background: #e95420; }
.run2::after { top: 25px; box-shadow: 0 8px #e95420; }
.grid9 { display: grid; grid-template-columns: repeat(3, 6px); gap: 6px; margin: auto 0 17px 18px; }
.grid9 i { width: 6px; height: 6px; border-radius: 50%; background: #f2f2f2; }

/* browser chrome */
.browser { width: 1853px; display: flex; flex-direction: column; }
.titlebar { height: 28px; background: linear-gradient(#3b3933, #4a4842); color: #dfdbd2; font-size: 15px; line-height: 27px; padding-left: 801px; display: flex; position: relative; flex: none; }
.winbtns { display: flex; gap: 4px; margin: 6px 5px 0 auto; }
.winbtns svg { width: 16px; height: 16px; fill: #85827b; stroke: #38362f; stroke-width: 1.200; }
.winbtns .x { fill: #ec6237; }
.tabs { display: flex; align-items: center; height: 34px; background: #dee1e6; padding-left: 9px; flex: none; }
.tab { width: 65.080px; height: 34px; display: flex; align-items: center; padding-left: 6px; position: relative; flex: none; }
.tab svg { width: 16px; height: 16px; }
.tab > span { margin-left: 9px; width: 27px; overflow: hidden; white-space: nowrap; font-size: 15.500px; -webkit-mask-image: linear-gradient(90deg, #000 60%, transparent); mask-image: linear-gradient(90deg, #000 60%, transparent); }
.tab::after { content: ""; position: absolute; right: 0; top: 8px; height: 20px; width: 1px; background: #85888c; }
.tab.last::after, .current::after { display: none; }
.tab.current { width: 66px; height: 34px; background: #fff; border-radius: 8px 8px 0 0; gap: 4px; padding-left: 8px; }
.tab.current svg:nth-child(2) { width: 12px; }
.tab.current svg:nth-child(3) { width: 10px; margin-left: 2px; }
.gt { color: #4285f4; }
.plus { margin-left: 15px; }
.navbar { display: flex; align-items: center; height: 36px; padding: 0 0 0 14px; flex: none; }
.navbar > .ln { margin-right: 16px; }
.ln { fill: none; stroke: #5f6368; stroke-width: 2; }
.ln.dim { stroke: #b8babc; }
.omnibox { width: 1400px; height: 28px; border-radius: 14px; background: #f1f3f4; display: flex; align-items: center; padding-left: 14px; margin-left: -2px; flex: none; }
.url { width: 1277px; margin-left: 11px; display: flex; font-size: 15.500px; line-height: 20px; color: #6d7175; }
.host { color: #202124; }
.omnibox > svg + svg { margin-left: 18px; }
.omnibox .url + svg { margin-left: 0; }
.grey { color: #74777b; margin-left: 18px; }
.ext { display: flex; gap: 16px; margin-left: 14px; }
.ext svg { width: 16px; height: 16px; }
.vsep { width: 1px; height: 18px; background: #c8cacd; flex: none; }
.navbar .vsep { margin: 0 11px 0 15px; }
.avatar { margin-right: 20px; }
.bookmarks { display: flex; align-items: center; height: 34px; padding: 0 0 4px 15px; gap: 18px; font-size: 15px; border-bottom: 1px solid #d8dadd; flex: none; }
.bookmarks a { display: flex; align-items: center; gap: 9px; height: 30px; }
.bookmarks svg { width: 14px; height: 15px; }
.bookmarks .more { margin-left: 73px; font-size: 18px; width: 10px; line-height: 20px; }
.bookmarks .vsep { margin-left: -9px; }
.bookmarks .other { margin-left: -7px; }

/* meeting */
.meeting { display: flex; height: 921px; background: #fff; flex: none; }
.side { width: 107px; padding: 19px 0 0 23px; flex: none; }
.info { width: 50px; height: 50px; border: 2px solid #ebebeb; border-radius: 50%; background: #fff; display: grid; place-items: center; }
.stage { width: 1639px; background: #2b292c; padding: 1px 0 0 61px; position: relative; flex: none; }
.share { width: 1517px; height: 863px; background: #fdfdfd; }
.apptitle { display: flex; align-items: center; height: 38px; padding: 0 0 3px 10px; border-bottom: 1px solid #bdbdbd; font-size: 15.500px; color: #222; }
.apptitle > span { margin-left: 6px; }
.wc { margin: 0 20px 1px auto; }
.appnav { display: flex; align-items: center; height: 76px; border-bottom: 2px solid #a5a5a5; font-family: Roboto, sans-serif; color: #757575; }
.burger { margin: 1px 47px 0 29px; }
.home { margin-right: 3px; }
.start { font-size: 24px; margin-bottom: 1px; }
.booktab { width: 235px; height: 76px; margin: 2px 0 0 13px; border-bottom: 3px solid #c9303e; padding: 0 0 4px 14px; display: flex; align-items: center; gap: 10px; font-size: 20px; color: #d0495b; }
.about { margin: 0 0 4px 708px; font-size: 17px; color: #8b8b8b; width: 44px; display: flex; }
.logo { margin: 0 0 1px 33px; width: 169px; height: 48px; background: #d50f27; padding: 0 0 3px 17px; display: flex; align-items: center; font: 700 31px "Open Sans", sans-serif; color: #fff; }
.tools { display: grid; grid-template-columns: 70px 42px 36px 30px 69px 305px 55px 44px 71px 61px 55px 63px 263px 41px 36px 33px 192px 30px; align-items: center; height: 46px; padding-left: 21px; border-bottom: 1px solid #c5c5c5; fill: #1468ac; color: #1468ac; position: relative; }
.st { fill: none; stroke: #1468ac; stroke-width: 2.400; }
.tools > svg { margin-left: -.5px; }
.full { margin-bottom: 2px; }
.box { height: 27px; border: 1.500px solid #a8a8a8; border-radius: 2px; color: #444; font: 16px/25px Roboto, sans-serif; margin-bottom: 5px; background: #fff; }
.pageno { width: 65px; padding-left: 40px; }
.zoom { width: 177px; padding-left: 8px; }
.cnt { color: #444; font: 16px/25px Roboto, sans-serif; margin-bottom: 5px; }
.pressed { width: 55px; height: 43px; background: #b3b3b3; border: 1px solid #777; border-radius: 2px; display: grid; place-items: center; }
.palette { position: absolute; z-index: 5; left: 608.500px; top: 47px; width: 300px; height: 59px; background: #fff; display: flex; gap: 12px; padding: 11px 0 0 12px; box-shadow: 2px 12px 18px rgba(0,0,0,.6); clip-path: inset(0 -50px -50px -50px); }
.palette i { width: 36px; height: 36px; border-radius: 50%; }
.c1 { background: #000; } .c2 { background: #001eff; } .c3 { background: #2a7f0a; } .c4 { background: #ff0; } .c5 { background: #fba300; } .c6 { background: #f41000; }

.viewer { display: flex; height: 683px; background: #ddd; padding-left: 129px; position: relative; }
.sheet { width: 1239px; height: 683px; background: #fefefe; overflow: hidden; position: relative; flex: none; font: 21px/27px "Liberation Serif", serif; color: #2c2d2f; }
.viewer::before, .viewer::after { content: ""; position: absolute; top: 0; bottom: 0; width: 8px; left: 121px; background: linear-gradient(270deg, #999, #ddd); }
.viewer::after { left: 1368px; background: linear-gradient(90deg, #8f8f8f, #ddd); }
.pagehead { display: flex; height: 31px; }
.rule { width: 978px; height: 2px; margin: 29px 37px 0 0; background: repeating-linear-gradient(90deg, #e793aa 0 5px, transparent 5px 7.300px); }
.chap, .part { overflow: hidden; height: 31px; font: italic 56px/56px "Liberation Serif", serif; }
.chap { width: 106px; background: #e6f4f1; color: #dd4054; text-align: right; padding-right: 15px; }
.part { width: 62px; margin-left: 1px; background: #e84150; color: #fff; text-align: center; font-size: 54px; }
.chap i, .part i { display: block; margin-top: -24px; }
.upper { display: grid; grid-template-columns: 903px 220px; height: 386px; }
h3 { font: 700 19px/27px "Noto Sans", sans-serif; color: #2b2d33; padding-left: 160px; position: relative; height: 27px; }
h3 em, .role > em { position: absolute; left: 119px; font-style: normal; font-weight: 600; color: #db4457; transform: scaleX(.85); transform-origin: 0 0; }
.upper h3:first-child { margin-top: 20px; }
h3 small { position: absolute; left: 77px; font: 18px/29px "Liberation Serif", serif; color: #db4457; }
h3 small::before { content: ""; position: absolute; left: -17px; top: 9px; border: 6px solid transparent; border-left: 10px solid #e04a60; border-right: 0; }
.duo { display: flex; margin-top: 9px; }
.duo .s { padding-left: 70px; }
.duo .s::before { left: 51px; }
.g { margin-top: 27px; }
.talk { margin-top: 9px; position: relative; }
.talk p { height: 27.140px; display: flex; }
.lesson p { position: relative; }
.talk p, .duo .r { padding-left: 183.500px; }
.r::before, .s::before { content: ""; position: absolute; left: 162px; top: 9px; width: 9px; height: 9px; border-radius: 50%; background: #db4457; }
.s::before { border-radius: 0; background: #38a3aa; top: 10px; width: 8px; height: 8px; }
.talk u { width: 202px; height: 23px; margin: 0 1px 0 4px; border-bottom: 1.500px solid #7fb3b4; flex: none; }
mark { background: #fbf7a6; color: inherit; }
.speaker { position: absolute; left: 47px; top: 4px; filter: drop-shadow(0 2px 1px #aaa); }
aside { padding-top: 149px; }
.wann { width: 218px; height: 97px; background: #e8f5f3; padding: 14px 0 0 18px; line-height: 25px; font-size: 20px; position: relative; }
.wann b { font: 700 18px/24px "Noto Sans", sans-serif; color: #7895ab; }
.wann q { color: #2b9fa8; }
.wann p { height: 25px; }
.wann::before, .wann::after { content: ""; position: absolute; left: 0; top: 0; width: 46px; height: 46px; border: dashed #7f9aab; border-width: 2px 0 0 2px; }
.wann::after { left: auto; top: auto; right: 0; bottom: 0; border-width: 0 2px 2px 0; }
.dates { margin-top: 20px; width: 220px; height: 88px; background: #fdf8cf; border: dashed #f4ee3c; border-width: 0 2px; padding: 7px 0 0 11px; font-size: 20px; line-height: 25.300px; }
.dates p { display: flex; width: 117px; justify-content: space-between; }
.dates p span { letter-spacing: -.3px; white-space: nowrap; }
.role { display: flex; height: 141px; position: relative; padding-left: 160px; }
.role > em, .roletext { font: 600 19px/27px "Noto Sans", sans-serif; padding-top: 4px; color: #2b2d33; }
.role > em { color: #db4457; }
.roletext { width: 250px; }
.roletext p { display: block; width: max-content; }
.role q, .next q { color: #db4457; }
.card { width: 336px; height: 141px; background: #f6f1df; padding: 8px 0 0 11px; flex: none; }
.card p { height: 27px; }
.card hr { width: 313px; margin: 9px 0 6px; border: 0; border-top: 2px dashed #c6c3b0; }
.card.flip { width: 353px; margin-left: 22px; transform: rotate(180deg); padding-top: 7px; }
.card.flip p { height: 26px; }
.card.flip hr { width: 326px; margin: 10px 0 8px; }
.next { display: grid; grid-template-columns: 903px 220px; margin-top: 36px; }
.next .lesson { position: relative; }
h2 { font: 600 25px/34px "Noto Sans", sans-serif; color: #d94459; padding-left: 118px; height: 34px; display: flex; position: relative; }
h2 em { font-style: normal; }
h2 em + span { margin-left: 16px; }
h2 small { position: absolute; left: 85px; top: 5px; font: 18px/30px "Liberation Serif", serif; color: #6d8ba0; }
.next h3 { margin-top: 18px; font-weight: 600; }
.link { position: absolute; left: 47px; top: 31px; }
.gut { margin-top: 17px; height: 40px; background: #fdf9cd; border: dashed #f4ee3c; border-width: 0 2px; padding: 8px 0 0 11px; font: 20px/26px "Liberation Serif", "DejaVu Sans", serif; }
.gut s { font: 23px/20px "DejaVu Sans", sans-serif; text-decoration: none; letter-spacing: -1px; }

/* annotations pinned on the sheet */
.note { position: absolute; font: 26px/30px "Liberation Sans", sans-serif; color: #222; }
.n1 { left: 457px; top: 206px; }
.n2 { left: 270px; top: 247px; }
.n3 { left: 307px; top: 284px; }
.n4 { left: 342px; top: 334px; }
.n5 { left: 679px; top: 214px; }
.n6 { left: 696px; top: 247px; }
.n7 { left: 592px; top: 377px; }
.n8 { left: 660px; top: 566px; }
.textcaret { position: absolute; left: 718px; top: 569px; width: 2px; height: 26px; background: #999; }
.dot { position: absolute; width: 2px; height: 2px; background: #222; }
.d1 { left: 588px; top: 388px; } .d2 { left: 586px; top: 410px; }
.blob { position: absolute; left: 632px; top: 431px; width: 17px; height: 16px; border-radius: 50%; background: #f8f59a; }
.marker { position: absolute; left: 450px; top: 212px; mix-blend-mode: multiply; }
.ibeam { position: absolute; left: 632px; top: 357px; }
.cicon { position: absolute; left: 1128px; top: 249px; fill: #000; }
.sticky { position: absolute; z-index: 3; left: 1257px; top: 318px; width: 215px; height: 111px; border: 1.500px solid #a9a9a9; background: #fff; font: 25px/28.500px "Liberation Mono", monospace; color: #555; padding-top: 0; white-space: nowrap; }
.sticky svg { position: absolute; right: 4px; bottom: 5px; }

.vbar { width: 21px; margin-left: auto; background: #f0f0f2; display: flex; flex-direction: column; align-items: center; }
.up, .down { border: 5px solid transparent; }
.up { border-bottom-color: #555; border-top: 0; margin-top: 8px; }
.down { border-top-color: #555; border-bottom: 0; margin: auto 0 8px; }
.vbar .thumb { width: 15px; height: 20px; margin-top: 423px; background: #c2c2c4; }
.hbar { height: 20px; display: flex; align-items: center; background: #f1f1f3; padding-left: 7px; border-right: 21px solid #ddd; }
.hbar .thumb { width: 1408px; height: 16px; background: #c1c1c1; margin-left: 8px; flex: none; }
.left, .right { border: 5px solid transparent; }
.left { border-right-color: #999; border-left: 0; }
.right { border-left-color: #444; border-right: 0; margin-left: 55px; }

/* floating meeting controls */
.pill { position: absolute; z-index: 6; left: 595px; top: 11px; width: 422px; height: 53px; border: 2px solid #ebebeb; border-radius: 27px; background: rgba(255,255,255,.93); font: 20px/50px "Liberation Sans", sans-serif; color: #000; padding-left: 14px; }
.speaks { position: absolute; z-index: 6; left: 1311px; top: 57px; width: 360px; height: 42px; border-radius: 3px; background: rgba(0,0,0,.2); display: flex; align-items: center; gap: 28px; padding-left: 14px; color: #fff; font: 20px "Liberation Sans", sans-serif; }
.mic { position: absolute; z-index: 6; left: 784px; top: 822px; width: 78px; height: 78px; border: 2px solid #f2452f; border-radius: 50%; background: rgba(242,69,47,.14); display: grid; place-items: center; }
```
FILE: fit.js
```js
// Condenses or widens each label to the line length given in data-w.
for (const el of document.querySelectorAll('[data-w]')) {
  const natural = el.offsetWidth;
  const wanted = Number(el.dataset.w);
  el.style.transform = 'scaleX(' + (wanted / natural).toFixed(4) + ')';
  el.style.marginRight = (wanted - natural) + 'px';
}
```
